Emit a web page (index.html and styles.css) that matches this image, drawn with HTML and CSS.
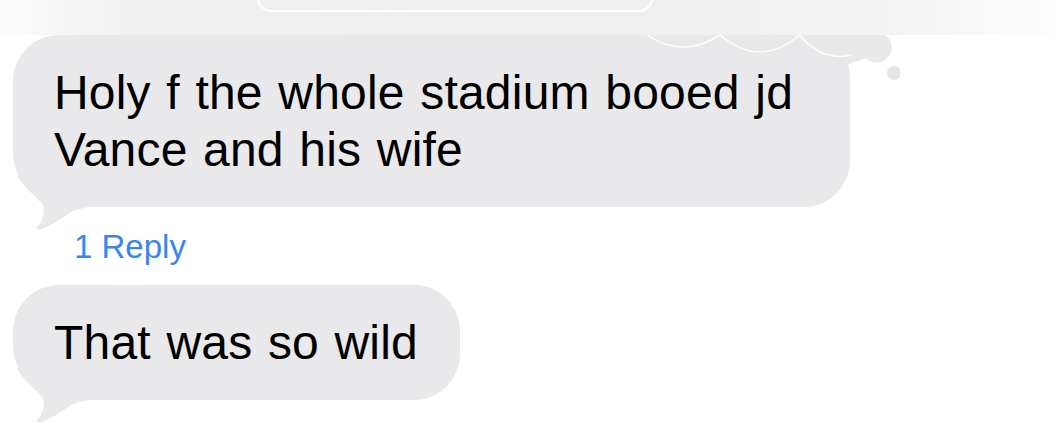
FILE: index.html
```html
<!DOCTYPE html>
<html lang="en">
<head>
    <meta charset="UTF-8">
    <meta name="viewport" content="width=device-width, initial-scale=1.0">
    <title>Messages</title>
    <link rel="stylesheet" href="styles.css">
</head>
<body>
    <div class="blur-band">
        <div class="ghost"></div>
    </div>

    <div class="thread">
        <div class="bubble bubble-first">
            <span class="text">Holy f the whole stadium booed jd Vance and his wife</span>
            <svg class="cloud" viewBox="0 0 270 47" width="270" height="47">
                <path d="M174 0 H255 A15 15 0 1 1 236 23 C229 27 222 26 218 30 C220 36 220 42 220 47 L174 47 Z" fill="#e9e9eb"/>
                <path d="M17 0 Q53 24 90 0 M90 0 Q130 34 170 0 M170 0 C185 20 205 24 221 20" fill="none" stroke="#ffffff" stroke-width="1.5" stroke-opacity="0.9"/>
                <circle cx="264" cy="38" r="7" fill="#e4e4e6"/>
            </svg>
            <svg class="tail" viewBox="0 0 80 64" width="80" height="64">
                <path d="M4 8 C10 20 24 30 30 38 C32 46 30 54 24 60 C23 62 26 63 29 62 C40 58 50 50 58 45 C65 42 72 40 80 40 L80 8 Z" fill="#e9e9eb"/>
            </svg>
        </div>

        <div class="reply-count">1 Reply</div>

        <div class="bubble">
            <span class="text">That was so wild</span>
            <svg class="tail" viewBox="0 0 80 64" width="80" height="64">
                <path d="M4 8 C10 20 24 30 30 38 C32 46 30 54 24 60 C23 62 26 63 29 62 C40 58 50 50 58 45 C65 42 72 40 80 40 L80 8 Z" fill="#e9e9eb"/>
            </svg>
        </div>
    </div>
</body>
</html>
```

FILE: styles.css
```css
body {
    font-family: 'Liberation Sans', Arial, sans-serif;
    margin: 0;
    padding: 0;
    background-color: #fff;
    color: #000;
}

.blur-band {
    height: 35px;
    overflow: hidden;
    background: linear-gradient(to right, #fdfdfd 0, #f6f6f6 60px, #f0f0f0 130px, #efefef 600px, #f2f2f2 880px, #f9f9f9 980px, #fefefe 1055px);
}

.ghost {
    margin-top: -20px;
    margin-left: 256px;
    width: 394px;
    height: 28px;
    border: 2px solid #fff;
    border-radius: 22px;
}

.thread {
    padding: 0 0 31px 13px;
}

.bubble {
    position: relative;
    width: fit-content;
    max-width: 837px;
    box-sizing: border-box;
    padding: 29px 42px 29px 41px;
    background-color: #e9e9eb;
    border-radius: 46px 46px 46px 56px;
    font-size: 48px;
    line-height: 57px;
    letter-spacing: 0.2px;
    word-spacing: 2px;
}

.bubble .text {
    position: relative;
    z-index: 1;
}

.bubble-first {
    width: 837px;
}

.tail {
    position: absolute;
    left: 0;
    bottom: -24px;
}

.cloud {
    position: absolute;
    top: 0;
    right: -50px;
}

.reply-count {
    margin: 21px 0 20px;
    padding-left: 61px;
    font-size: 33px;
    line-height: 37px;
    color: #3a86ef;
}
```
